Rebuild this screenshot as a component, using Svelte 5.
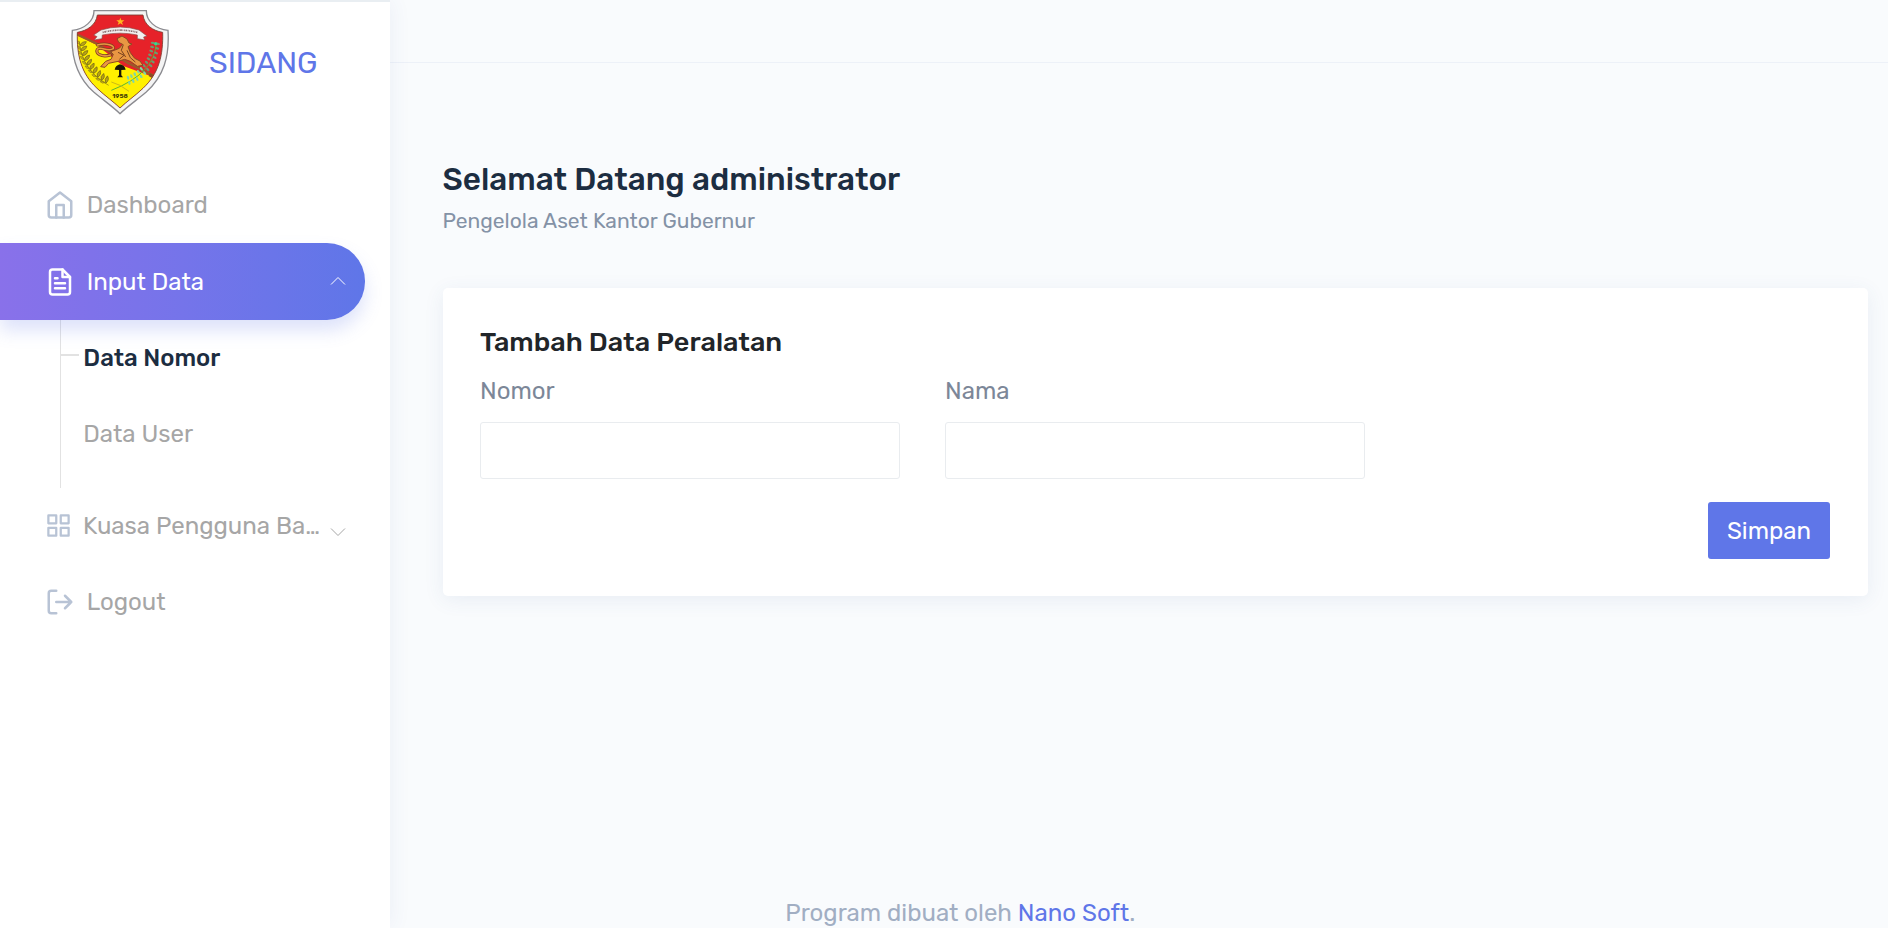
<script>
  const subItems = [
    { label: 'Data Nomor', active: true },
    { label: 'Data User', active: false }
  ];
  const fields = ['Nomor', 'Nama'];
  // Leaf positions along the two sprigs of the emblem
  const cotton = [[60,132],[62,147],[66,162],[72,177],[79,191],[88,204],[98,216],[109,228],[121,238],[134,246]];
  const rice = [[286,130],[284,143],[281,156],[277,169],[272,181],[266,192],[258,203],[249,213],[239,222],[228,230],[217,236],[206,241]];
</script>

<div class="page">
  <aside>
    <div class="brand">
      <svg class="emblem" viewBox="33 27 294 318" aria-hidden="true">
        <defs>
          <clipPath id="shield"><path d="M112 45H249C253 75 278 92 308 97C310 165 297 220 249 265C222 290 201 304 180 324C159 304 138 290 111 265C63 220 50 165 52 97C82 92 108 75 112 45Z" /></clipPath>
        </defs>
        <path d="M102 32H259C259 62 286 88 324 91C329 170 311 230 258 277C228 302 204 318 180 341C156 318 132 302 102 277C49 230 31 170 37 91C74 88 102 62 102 32Z" fill="#f4f4f4" stroke="#8b8b90" stroke-width="4" />
        <g clip-path="url(#shield)">
          <path d="M40 35H320V340H40Z" fill="#e62229" />
          <path d="M45 102L110 135L190 198L294 236L250 290L180 330L100 280L45 200Z" fill="#fff000" />
          <path d="M50 103L112 132L202 188L290 232" fill="none" stroke="#9a5a2b" stroke-width="7" />
          {#each cotton as [x, y], i}
            <g transform="translate({x} {y}) rotate({-i * 5})">
              <path d="M0 2Q-10 0 -9 -11Q0 -9 0 2Z" fill="#cdb51a" stroke="#857814" stroke-width="1.5" />
              <path d="M0 5Q15 7 19 -7Q4 -8 0 5Z" fill="#b8a217" stroke="#6e6418" stroke-width="2" />
            </g>
          {/each}
          <path d="M58 124Q66 212 146 256" fill="none" stroke="#857814" stroke-width="2" />
          <path d="M289 128Q285 220 154 271" fill="none" stroke="#5cb531" stroke-width="3" />
          <path d="M154 246Q179 252 207 274" fill="none" stroke="#cbb916" stroke-width="3" />
          {#each rice as [x, y], i}
            <g transform="translate({x} {y}) rotate({10 + i * 6})">
              <ellipse cx="-8" rx="6" ry="3.5" fill={i > 6 ? '#7fd6a8' : '#6f9a70'} />
              <ellipse cx="8" rx="6" ry="3.5" fill={i > 6 ? '#7fd6a8' : '#6f9a70'} />
            </g>
          {/each}
          <circle cx="287" cy="131" r="5" fill="#39d48f" />
          <path d="M268 224L289 236" stroke="#8a4a24" stroke-width="9" />
        </g>
        <path d="M112 45H249C253 75 278 92 308 97C310 165 297 220 249 265C222 290 201 304 180 324C159 304 138 290 111 265C63 220 50 165 52 97C82 92 108 75 112 45Z" fill="none" stroke="#7a3d30" stroke-width="2.5" />
        <path d="M181 53L184 61L193 61L186 67L189 75L181 70L173 75L176 67L169 61L178 61Z" fill="#ffb81c" />
        <path d="M123 90Q181 72 237 90L261 108L251 111L254 120L232 116V105Q181 94 127 105L126 116L102 120L111 110L101 105Z" fill="#f2f0ef" stroke="#8c4745" stroke-width="2" />
        <path d="M128 97Q181 84 232 97" fill="none" stroke="#8b6e70" stroke-width="5" stroke-dasharray="3 2 5 2 2 2" />
        <path d="M171 116L186 108L201 117L207 129L216 132L204 140L211 158L224 175L240 183L249 196L232 199L211 184L194 178L174 184L146 190L135 202L122 200L137 184L153 178L160 163L152 155L178 145L188 133L176 127Z" fill="#e99743" stroke="#8a4a24" stroke-width="3" stroke-linejoin="round" />
        <path d="M151 165C124 173 105 160 112 148C121 137 143 157 160 146C165 136 139 128 112 135" fill="none" stroke="#7f3f1f" stroke-width="9" stroke-linecap="round" />
        <path d="M151 165C124 173 105 160 112 148C121 137 143 157 160 146C165 136 139 128 112 135" fill="none" stroke="#e99743" stroke-width="4.5" stroke-linecap="round" />
        <path d="M190 134L184 151L197 171M174 157L192 166L178 178M201 151L211 173L226 186" fill="none" stroke="#79421f" stroke-width="3" />
        <path d="M164 209Q167 196 180 193Q194 196 197 209L184 210V226L189 232H172L177 226V210Z" fill="#171607" />
        <text x="180" y="293" text-anchor="middle">1958</text>
      </svg>
      <span class="brand-name">SIDANG</span>
    </div>

    <nav>
      <a class="item" href="#dashboard">
        <svg class="icon" viewBox="0 0 24 24"><path d="M3 9l9-7 9 7v11a2 2 0 0 1-2 2H5a2 2 0 0 1-2-2z" /><path d="M9 22V12h6v10" /></svg>
        <span>Dashboard</span>
      </a>
      <a class="item selected" href="#input">
        <svg class="icon" viewBox="0 0 24 24"><path d="M14 2H6a2 2 0 0 0-2 2v16a2 2 0 0 0 2 2h12a2 2 0 0 0 2-2V8z" /><path d="M14 2v6h6M16 13H8M16 17H8M10 9H8" /></svg>
        <span>Input Data</span>
        <svg class="chevron" viewBox="0 0 16 10"><path d="M1 8.5L8 1.5L15 8.5" /></svg>
      </a>
      <div class="sub">
        {#each subItems as s}
          <a href="#sub" class:active={s.active}>{s.label}</a>
        {/each}
      </div>
      <a class="item grid-item" href="#kuasa">
        <svg class="icon small" viewBox="0 0 24 24"><path d="M3 3h7v7H3zM14 3h7v7h-7zM14 14h7v7h-7zM3 14h7v7H3z" /></svg>
        <span>Kuasa Pengguna Ba…</span>
        <svg class="chevron down" viewBox="0 0 16 10"><path d="M1 1.5L8 8.5L15 1.5" /></svg>
      </a>
      <a class="item" href="#logout">
        <svg class="icon" viewBox="0 0 24 24"><path d="M9 21H5a2 2 0 0 1-2-2V5a2 2 0 0 1 2-2h4M16 17l5-5-5-5M21 12H9" /></svg>
        <span>Logout</span>
      </a>
    </nav>
  </aside>

  <div class="content">
    <header></header>
    <main>
      <h3>Selamat Datang administrator</h3>
      <h6>Pengelola Aset Kantor Gubernur</h6>
      <section class="card">
        <h4>Tambah Data Peralatan</h4>
        <div class="fields">
          {#each fields as f}
            <label><span>{f}</span><input type="text" /></label>
          {/each}
        </div>
        <div class="actions"><button>Simpan</button></div>
      </section>
    </main>
    <footer>Program dibuat oleh <a href="#nano">Nano Soft</a>.</footer>
  </div>
</div>

<style>
  :global(body) { background: #f9fbfd; overflow: hidden; }
  * { box-sizing: border-box; }
  a { text-decoration: none; }
  .page {
    display: flex;
    height: 928px;
    overflow: hidden;
    background: #f9fbfd;
    font: 400 24px/36px Rubik, Roboto, sans-serif;
    color: #7c8798;
  }
  aside {
    width: 390px;
    flex: none;
    z-index: 1;
    background: #fff;
    border-top: 2px solid #e9eef2;
    box-shadow: 1px 0 20px rgba(63, 80, 160, 0.07);
  }
  .brand { display: flex; height: 120px; padding: 7px 0 0 71px; }
  .emblem { width: 98px; height: 106px; flex: none; }
  .emblem text { font: 700 19px Rubik, Roboto, sans-serif; fill: #443e08; }
  .brand-name { margin: 36px 0 0 40px; font-size: 30px; line-height: 36px; color: #5f76e8; }
  nav { padding-top: 44.5px; }
  .item {
    display: flex;
    align-items: center;
    width: 365px;
    height: 76.5px;
    padding-left: 44.7px;
    color: #a6a6a6;
    white-space: nowrap;
  }
  .item > span { margin-left: 12px; }
  .icon {
    width: 30px;
    height: 30px;
    flex: none;
    fill: none;
    stroke: #b8c3d5;
    stroke-width: 2;
    stroke-linecap: round;
    stroke-linejoin: round;
  }
  .icon.small { width: 27px; height: 27px; }
  .selected {
    position: relative;
    height: 77px;
    margin-bottom: -0.5px;
    color: #fff;
    border-radius: 0 38px 38px 0;
    background: linear-gradient(to right, #8971ea, #7f72ea, #7574ea, #6a75e9, #5f76e8);
    box-shadow: 0 10.5px 18px rgba(95, 118, 232, 0.21);
  }
  .selected .icon { stroke: #fff; }
  .chevron { width: 16px; height: 10px; margin: -2px 19.5px 0 auto; fill: none; stroke: currentColor; stroke-width: 1; }
  .down { margin-top: 12px; }
  .grid-item > span { margin-left: 11.3px; }
  .sub {
    height: 168px;
    margin-left: 60px;
    border-left: 1px solid #e2e2e2;
  }
  .sub a {
    display: flex;
    align-items: center;
    height: 76.5px;
    padding-left: 22.3px;
    color: #a6a6a6;
  }
  .sub .active { padding-left: 0; color: #1c2d41; font-weight: 500; }
  .sub .active::before { content: ''; width: 18px; height: 2px; margin: -5px 4.3px 0 0; background: #e2e2e2; }
  .content { flex: 1; display: flex; flex-direction: column; }
  header { height: 63px; border-bottom: 1px solid #edf1f8; }
  main { flex: 1; padding: 98px 20px 0 52.5px; }
  h3, h4, h6 { margin: 0; }
  h3 { font-size: 31.5px; line-height: 37px; font-weight: 500; color: #1c2d41; }
  h6 { margin-top: 10px; font-size: 21px; line-height: 25px; font-weight: 400; color: #8492a6; }
  .card {
    height: 308px;
    margin-top: 55px;
    padding: 38px 38px 0 37px;
    margin-left: 0.5px;
    border-radius: 5px;
    background: #fff;
    box-shadow: 0 4px 20px rgba(63, 90, 150, 0.085);
  }
  h4 { font-size: 27px; line-height: 33px; font-weight: 500; color: #212529; }
  .fields { display: flex; gap: 45px; margin-top: 14px; }
  label span { display: block; }
  input {
    display: block;
    width: 420px;
    height: 57px;
    margin-top: 13px;
    border: 1px solid #e9ecef;
    border-radius: 3px;
    background: #fff;
  }
  .actions { display: flex; justify-content: flex-end; margin-top: 23px; }
  button {
    width: 122px;
    height: 57px;
    padding: 0;
    border: 0;
    border-radius: 3px;
    background: #5f76e8;
    color: #fff;
    font: inherit;
  }
  footer { height: 33px; padding-left: 395.3px; line-height: 36px; color: #a1aec3; }
  footer a { color: #5f76e8; }
</style>
